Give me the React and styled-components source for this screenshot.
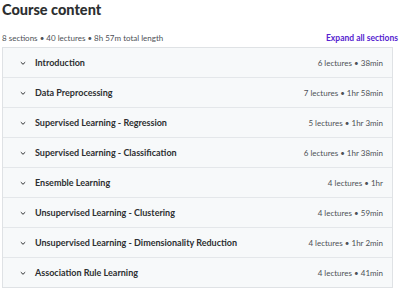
import styled, { createGlobalStyle } from "styled-components"

const sections = [
    { title: "Introduction", info: "6 lectures • 38min" },
    { title: "Data Preprocessing", info: "7 lectures • 1hr 58min" },
    { title: "Supervised Learning - Regression", info: "5 lectures • 1hr 3min" },
    { title: "Supervised Learning - Classification", info: "6 lectures • 1hr 38min" },
    { title: "Ensemble Learning", info: "4 lectures • 1hr" },
    { title: "Unsupervised Learning - Clustering", info: "4 lectures • 59min" },
    { title: "Unsupervised Learning - Dimensionality Reduction", info: "4 lectures • 1hr 2min" },
    { title: "Association Rule Learning", info: "4 lectures • 41min" },
]

function Chevron() {
    return (
        <svg width="8" height="8" viewBox="0 0 8 8">
            <path d="M1.8 3.2 L4 5.3 L6.2 3.2" fill="none" stroke="#2d2f31" strokeWidth="1" />
        </svg>
    )
}

export default function App() {
    return (
        <>
            <GlobalStyle />
            <Page>
                <Title>Course content</Title>
                <Meta>
                    <span>8 sections • 40 lectures • 8h 57m total length</span>
                    <ExpandLink>Expand all sections</ExpandLink>
                </Meta>
                <Accordion>
                    {sections.map((s) => (
                        <Row key={s.title}>
                            <Chevron />
                            <RowTitle>{s.title}</RowTitle>
                            <RowInfo>{s.info}</RowInfo>
                        </Row>
                    ))}
                </Accordion>
            </Page>
        </>
    )
}

// style CSS

const GlobalStyle = createGlobalStyle`
    body {
        margin: 0;
        background: #fff;
        font-family: Lato, "Liberation Sans", sans-serif;
        color: #2d2f31;
    }
`

const Page = styled.div`
    padding: 0 4px 0 2px;
    width: 400px;
    box-sizing: border-box;
`

const Title = styled.h2`
    margin: 0;
    font-size: 14.5px;
    font-weight: 900;
    line-height: 19px;
`

const Meta = styled.div`
    display: flex;
    justify-content: space-between;
    align-items: center;
    margin-top: 12px;
    height: 14px;
    font-size: 8px;
    color: #4d5156;
`

const ExpandLink = styled.span`
    color: #5624d0;
    font-weight: 700;
    font-size: 8.5px;
    margin-right: -2px;
`

const Accordion = styled.div`
    margin-top: 2px;
    border: 1px solid #dfe2e5;
    width: 391px;
    box-sizing: border-box;
`

const Row = styled.div`
    display: flex;
    align-items: center;
    height: 30px;
    box-sizing: border-box;
    padding: 0 9px 0 16px;
    background: #f7f9fa;
    border-top: 1px solid #e4e7ea;
    &:first-child {
        border-top: none;
        height: 29px;
    }
    svg {
        flex: none;
    }
`

const RowTitle = styled.span`
    flex: 1;
    margin-left: 8px;
    font-size: 9px;
    font-weight: 700;
`

const RowInfo = styled.span`
    font-size: 8px;
    color: #4d5156;
`
